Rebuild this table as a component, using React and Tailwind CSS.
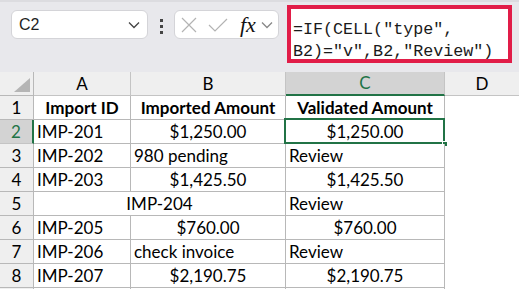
import React from "react";

const Chevron = ({ className }) => (
  <svg width="12" height="8" viewBox="0 0 12 8" fill="none" className={className}>
    <path d="M1 1.5L6 6.5L11 1.5" stroke="currentColor" strokeWidth="1.3" />
  </svg>
);

const rows = [
  { n: 1, a: "Import ID", b: "Imported Amount", c: "Validated Amount", head: true },
  { n: 2, a: "IMP-201", b: "$1,250.00", bAlign: "center", c: "$1,250.00", cAlign: "center", sel: true },
  { n: 3, a: "IMP-202", b: "980 pending", bAlign: "left", c: "Review", cAlign: "left" },
  { n: 4, a: "IMP-203", b: "$1,425.50", bAlign: "center", c: "$1,425.50", cAlign: "center" },
  { n: 5, merged: "IMP-204", c: "Review", cAlign: "left" },
  { n: 6, a: "IMP-205", b: "$760.00", bAlign: "center", c: "$760.00", cAlign: "center" },
  { n: 7, a: "IMP-206", b: "check invoice", bAlign: "left", c: "Review", cAlign: "left" },
  { n: 8, a: "IMP-207", b: "$2,190.75", bAlign: "center", c: "$2,190.75", cAlign: "center" },
];

const cell = "h-6 border-r border-b border-[#b8b8b8] flex items-center bg-white";
const align = (a) => (a === "center" ? "justify-center" : "justify-start pl-[3px]");

export default function App() {
  return (
    <div className="w-[519px] h-[289px] overflow-hidden bg-white font-['Lato',sans-serif] text-[17px] text-black">
      {/* formula bar */}
      <div className="h-[72px] bg-[#e8e8ec] border-t-[2px] border-[#dcdce0] flex items-start">
        <div className="ml-[11px] mt-[8px] w-[137px] h-[29px] bg-white border border-[#d4d4d8] rounded-[6px] flex items-center justify-between pl-[7px] pr-[7px]">
          <span className="font-['Liberation_Sans',sans-serif] text-[16px] text-[#1f1f1f]">C2</span>
          <Chevron className="text-[#444]" />
        </div>
        <div className="ml-[12px] mt-[17px] flex flex-col gap-[3px]">
          <div className="w-[3px] h-[3px] bg-[#444]" />
          <div className="w-[3px] h-[3px] bg-[#444]" />
          <div className="w-[3px] h-[3px] bg-[#444]" />
        </div>
        <div className="ml-[11px] mt-[8px] w-[105px] h-[29px] bg-white border border-[#d4d4d8] rounded-[6px] flex items-center pl-[6px]">
          <svg width="16" height="16" viewBox="0 0 16 16" fill="none">
            <path d="M1 1L15 15M15 1L1 15" stroke="#b3b3b3" strokeWidth="1.2" />
          </svg>
          <svg width="20" height="16" viewBox="0 0 20 16" fill="none" className="ml-[11px]">
            <path d="M1 8L7 14L19 2" stroke="#b3b3b3" strokeWidth="1.2" />
          </svg>
          <span className="ml-[12px] font-['Liberation_Serif',serif] italic text-[22px] leading-none text-[#111]">fx</span>
          <Chevron className="ml-[5px] text-[#888]" />
        </div>
        <div className="ml-[8px] mt-[3px] w-[225px] h-[58px] bg-white border-[4px] border-[#e11d48] pl-[2px] pt-[10px] font-['Liberation_Mono',monospace] text-[16.7px] leading-[22px] text-[#1a1a1a] whitespace-nowrap">
          <div>=IF(CELL("type",</div>
          <div>B2)="v",B2,"Review")</div>
        </div>
      </div>

      {/* sheet */}
      <div className="grid grid-cols-[34px_97px_155px_159px_1fr]">
        {/* column headers */}
        <div className="h-6 bg-[#efefef] border-r border-b border-[#b8b8b8] flex items-end justify-end pr-[3px] pb-[3px]">
          <svg width="16" height="14" viewBox="0 0 16 14">
            <path d="M16 0L16 14L0 14Z" fill="#b5b5b5" />
          </svg>
        </div>
        <div className="h-6 bg-[#efefef] border-r border-b border-[#c4c4c4] flex items-center justify-center">A</div>
        <div className="h-6 bg-[#efefef] border-r border-b border-[#c4c4c4] flex items-center justify-center">B</div>
        <div className="h-6 bg-[#d3d3d3] border-r border-[#c4c4c4] border-b-2 border-b-[#217346] flex items-center justify-center text-[#217346]">C</div>
        <div className="h-6 bg-[#efefef] border-b border-[#c4c4c4] flex items-center justify-center">D</div>

        {rows.map((r) => (
          <React.Fragment key={r.n}>
            <div
              className={
                r.sel
                  ? "h-6 bg-[#d3d3d3] border-b border-[#c4c4c4] border-r-2 border-r-[#217346] flex items-center justify-center text-[#217346]"
                  : "h-6 bg-[#efefef] border-r border-b border-[#b8b8b8] flex items-center justify-center"
              }
            >
              {r.n}
            </div>
            {r.merged ? (
              <div className={`${cell} col-span-2 justify-center`}>{r.merged}</div>
            ) : r.head ? (
              <>
                <div className={`${cell} justify-center font-bold bg-[#f2dcdb]`}>{r.a}</div>
                <div className={`${cell} justify-center font-bold bg-[#f2dcdb]`}>{r.b}</div>
              </>
            ) : (
              <>
                <div className={`${cell} pl-[3px]`}>{r.a}</div>
                <div className={`${cell} ${align(r.bAlign)}`}>{r.b}</div>
              </>
            )}
            {r.head ? (
              <div className={`${cell} justify-center font-bold bg-[#d8e4bc]`}>{r.c}</div>
            ) : (
              <div className={`${cell} ${align(r.cAlign)} relative`}>
                {r.c}
                {r.sel && (
                  <>
                    <div className="absolute left-[-2px] top-[-2px] right-[-1px] bottom-[-1px] border-2 border-[#217346]" />
                    <div className="absolute right-[-4px] bottom-[-4px] w-[6px] h-[6px] bg-[#217346] border border-white" />
                  </>
                )}
              </div>
            )}
            <div className="h-6 bg-white" />
          </React.Fragment>
        ))}
        <div className="h-6 bg-[#efefef] border-r border-[#b8b8b8]" />
        <div className="h-6 border-r border-[#b8b8b8]" />
        <div className="h-6 border-r border-[#b8b8b8]" />
        <div className="h-6 border-r border-[#b8b8b8]" />
        <div className="h-6" />
      </div>
    </div>
  );
}
